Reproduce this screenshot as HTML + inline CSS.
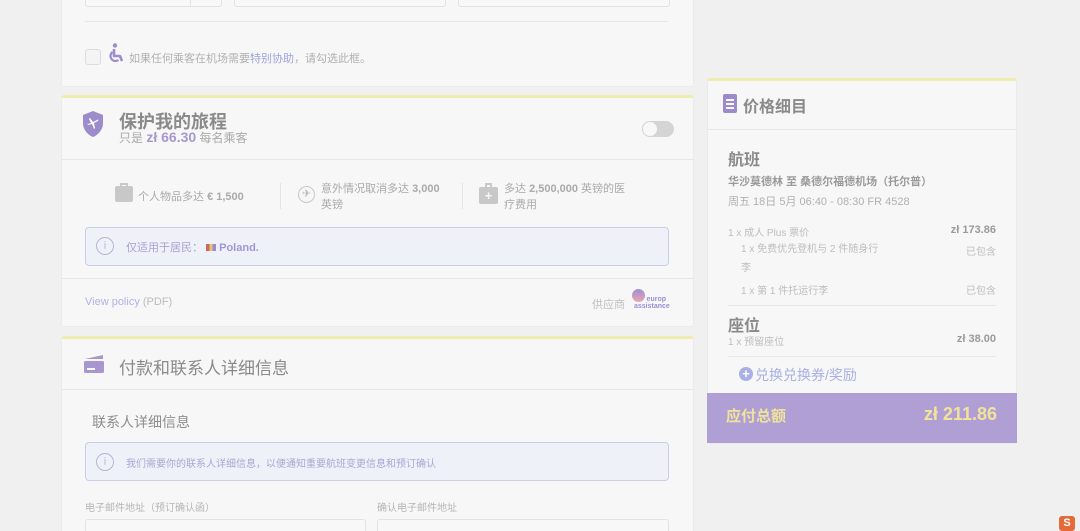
<!DOCTYPE html>
<html><head><meta charset="utf-8"><style>
*{box-sizing:border-box;margin:0;padding:0}
html,body{width:1080px;height:531px;overflow:hidden}
body{background:#f0f0f0;font-family:"Liberation Sans","Noto Sans CJK SC",sans-serif;position:relative;color:#aaa}
.a{position:absolute}
.card{position:absolute;background:#f7f7f7;border:1px solid #ebebeb;border-radius:3px}
.yt{border-top:3px solid #f0ecb0}
.hr{position:absolute;height:1px;background:#e6e6e6}
.box{position:absolute;border:1px solid #c9cde8;background:#eff1f8;border-radius:4px}
.ic{position:absolute;width:18px;height:18px;border:1px solid #b7b4dc;border-radius:50%;color:#b7b4dc;font-size:11px;text-align:center;line-height:16px}
.in{position:absolute;border:1px solid #e3e3e3;background:#f8f8f8;border-radius:3px}
</style></head><body>

<!-- card 1 -->
<div class="card" style="left:61px;top:-5px;width:633px;height:92px"></div>
<div class="in" style="left:85px;top:-5px;width:137px;height:12px"></div>
<div class="a" style="left:190px;top:-5px;width:1px;height:12px;background:#e3e3e3"></div>
<div class="in" style="left:234px;top:-5px;width:212px;height:12px"></div>
<div class="in" style="left:458px;top:-5px;width:212px;height:12px"></div>
<div class="hr" style="left:85px;top:21px;width:583px"></div>
<div class="a" style="left:85px;top:49px;width:16px;height:16px;border:1px solid #ddd;border-radius:3px;background:#f4f4f4"></div>
<svg class="a" style="left:108px;top:43px" width="18" height="20" viewBox="0 0 18 20"><circle cx="7" cy="2.5" r="2.2" fill="#9f8ccc"/><path d="M6 6v7h6l2 5" stroke="#9f8ccc" stroke-width="2.6" fill="none" stroke-linejoin="round"/><path d="M4.5 9a5 5 0 1 0 6 8" stroke="#9f8ccc" stroke-width="2.2" fill="none"/></svg>
<div class="a" style="left:129px;top:50px;font-size:11px;color:#b0b0b0">如果任何乘客在机场需要<span style="color:#9fa3dc">特别协助</span>，请勾选此框。</div>

<!-- card 2 -->
<div class="card yt" style="left:61px;top:95px;width:633px;height:232px"></div>
<svg class="a" style="left:81px;top:110px" width="24" height="28" viewBox="0 0 24 28"><path d="M12 1L2 5v8c0 7 5 12 10 14 5-2 10-7 10-14V5z" fill="#9d8ccb"/><path d="M7 15l4-1 2 5 1-1-1-5 4-2c1-1 0-2-1-1l-4 2-3-4-1 1 2 4-3 1-1-1z" fill="#fff"/></svg>
<div class="a" style="left:119px;top:108px;font-size:18px;font-weight:bold;color:#8a8a8a">保护我的旅程</div>
<div class="a" style="left:119px;top:129px;font-size:12px;color:#aaa">只是 <b style="color:#a897cf;font-size:14px">zł 66.30</b> 每名乘客</div>
<div class="a" style="left:642px;top:121px;width:32px;height:16px;border-radius:8px;background:#d4d4d4"></div>
<div class="a" style="left:643px;top:122px;width:14px;height:14px;border-radius:50%;background:#f8f8f8"></div>
<div class="hr" style="left:62px;top:159px;width:631px"></div>
<div class="a" style="left:115px;top:186px;width:18px;height:16px;background:#c8c8c8;border-radius:2px"></div>
<div class="a" style="left:120px;top:183px;width:8px;height:4px;border:2px solid #c8c8c8;border-bottom:none"></div>
<div class="a" style="left:138px;top:188px;font-size:11px;color:#aaa">个人物品多达 <b>€ 1,500</b></div>
<div class="a" style="left:280px;top:183px;width:1px;height:26px;background:#e5e5e5"></div>
<div class="a" style="left:298px;top:186px;width:17px;height:17px;border:1px solid #c8c8c8;border-radius:50%;color:#bbb;font-size:11px;text-align:center;line-height:15px">✈</div>
<div class="a" style="left:321px;top:181px;font-size:11px;line-height:16px;color:#aaa;width:130px">意外情况取消多达 <b>3,000</b><br>英镑</div>
<div class="a" style="left:462px;top:183px;width:1px;height:26px;background:#e5e5e5"></div>
<div class="a" style="left:479px;top:187px;width:19px;height:17px;background:#c8c8c8;border-radius:2px;color:#f7f7f7;font-size:13px;text-align:center;line-height:17px;font-weight:bold">+</div>
<div class="a" style="left:485px;top:183px;width:7px;height:4px;border:2px solid #c8c8c8;border-bottom:none"></div>
<div class="a" style="left:504px;top:181px;font-size:11px;line-height:16px;color:#aaa">多达 <b>2,500,000</b> 英镑的医<br>疗费用</div>
<div class="box" style="left:85px;top:227px;width:584px;height:39px"></div>
<div class="ic" style="left:96px;top:237px">i</div>
<div class="a" style="left:126px;top:239px;font-size:11px;color:#a9a3d4">仅适用于居民： <span style="display:inline-block;width:10px;height:7px;background:linear-gradient(90deg,#c66 33%,#e9c760 33% 66%,#9a8ad0 66%)"></span> <b style="color:#9e96d6">Poland.</b></div>
<div class="hr" style="left:62px;top:278px;width:631px"></div>
<div class="a" style="left:85px;top:296px;font-size:11px;color:#aeb2e4">View policy <span style="color:#bbb">(PDF)</span></div>
<div class="a" style="left:592px;top:296px;font-size:11px;color:#c0c0c0">供应商</div>
<div class="a" style="left:632px;top:289px;width:13px;height:13px;border-radius:50%;background:linear-gradient(#9f8ed6,#e8a7b0)"></div>
<div class="a" style="left:634px;top:296px;font-size:7px;line-height:7px;color:#9a8ed6;font-weight:bold;text-align:right;width:32px">europ<br>assistance</div>

<!-- card 3 -->
<div class="card yt" style="left:61px;top:336px;width:633px;height:200px"></div>
<svg class="a" style="left:83px;top:353px" width="22" height="21" viewBox="0 0 22 21"><path d="M2 6L20 2v4z" fill="#a896ce"/><rect x="1" y="8" width="20" height="12" rx="1.5" fill="#a896ce"/><rect x="4" y="15" width="8" height="2" fill="#f7f7f7"/></svg>
<div class="a" style="left:119px;top:354px;font-size:17px;color:#8a8a8a">付款和联系人详细信息</div>
<div class="hr" style="left:62px;top:389px;width:631px"></div>
<div class="a" style="left:92px;top:412px;font-size:14px;color:#8e8e8e">联系人详细信息</div>
<div class="box" style="left:85px;top:442px;width:584px;height:39px"></div>
<div class="ic" style="left:96px;top:453px">i</div>
<div class="a" style="left:126px;top:455px;font-size:10px;color:#aaa6d3">我们需要你的联系人详细信息，以便通知重要航班变更信息和预订确认</div>
<div class="a" style="left:85px;top:499px;font-size:10px;color:#b5b5b5">电子邮件地址（预订确认函）</div>
<div class="a" style="left:377px;top:499px;font-size:10px;color:#b5b5b5">确认电子邮件地址</div>
<div class="in" style="left:85px;top:519px;width:281px;height:20px"></div>
<div class="in" style="left:377px;top:519px;width:292px;height:20px"></div>

<!-- right card -->
<div class="card yt" style="left:707px;top:78px;width:310px;height:366px"></div>
<div class="a" style="left:723px;top:94px;width:14px;height:19px;background:#9c8bcc;border-radius:2px"></div>
<div class="a" style="left:726px;top:99px;width:8px;height:2px;background:#f7f7f7;box-shadow:0 4px 0 #f7f7f7,0 8px 0 #f7f7f7"></div>
<div class="a" style="left:743px;top:93px;font-size:16px;font-weight:bold;color:#8a8a8a">价格细目</div>
<div class="hr" style="left:708px;top:129px;width:308px"></div>
<div class="a" style="left:728px;top:146px;font-size:16px;font-weight:bold;color:#8a8a8a">航班</div>
<div class="a" style="left:728px;top:173px;font-size:11px;font-weight:bold;color:#9a9a9a">华沙莫德林 至 桑德尔福德机场（托尔普）</div>
<div class="a" style="left:728px;top:193px;font-size:11px;color:#b0b0b0">周五 18日 5月 06:40 - 08:30 FR 4528</div>
<div class="a" style="left:728px;top:224px;font-size:10px;color:#bdbdbd">1 x 成人 Plus 票价</div>
<div class="a" style="left:900px;top:224px;width:96px;text-align:right;font-size:11px;font-weight:bold;color:#9a9a9a">zł 173.86</div>
<div class="a" style="left:741px;top:240px;font-size:10px;line-height:19px;color:#bdbdbd;width:160px">1 x 免费优先登机与 2 件随身行<br>李</div>
<div class="a" style="left:940px;top:243px;width:56px;text-align:right;font-size:10px;color:#bdbdbd">已包含</div>
<div class="a" style="left:741px;top:282px;font-size:10px;color:#bdbdbd">1 x 第 1 件托运行李</div>
<div class="a" style="left:940px;top:282px;width:56px;text-align:right;font-size:10px;color:#bdbdbd">已包含</div>
<div class="hr" style="left:728px;top:305px;width:268px"></div>
<div class="a" style="left:728px;top:312px;font-size:16px;font-weight:bold;color:#8a8a8a">座位</div>
<div class="a" style="left:728px;top:333px;font-size:10px;color:#bdbdbd">1 x 预留座位</div>
<div class="a" style="left:900px;top:333px;width:96px;text-align:right;font-size:11px;font-weight:bold;color:#9a9a9a">zł 38.00</div>
<div class="hr" style="left:728px;top:356px;width:268px"></div>
<div class="a" style="left:739px;top:367px;width:14px;height:14px;border-radius:50%;background:#aab0e4;color:#fff;font-size:13px;line-height:14px;text-align:center;font-weight:bold">+</div>
<div class="a" style="left:755px;top:365px;font-size:14px;color:#aab0e4">兑换兑换券/奖励</div>
<div class="a" style="left:707px;top:393px;width:310px;height:50px;background:#b09fd5"></div>
<div class="a" style="left:726px;top:405px;font-size:15px;font-weight:bold;color:#f1e39a">应付总额</div>
<div class="a" style="left:860px;top:404px;width:137px;text-align:right;font-size:18px;font-weight:bold;color:#f1e39a">zł 211.86</div>

<div class="a" style="left:1059px;top:516px;width:16px;height:15px;background:#e46a3a;border-radius:3px;color:#fff;font-size:11px;font-weight:bold;text-align:center;line-height:15px">S</div>
</body></html>
